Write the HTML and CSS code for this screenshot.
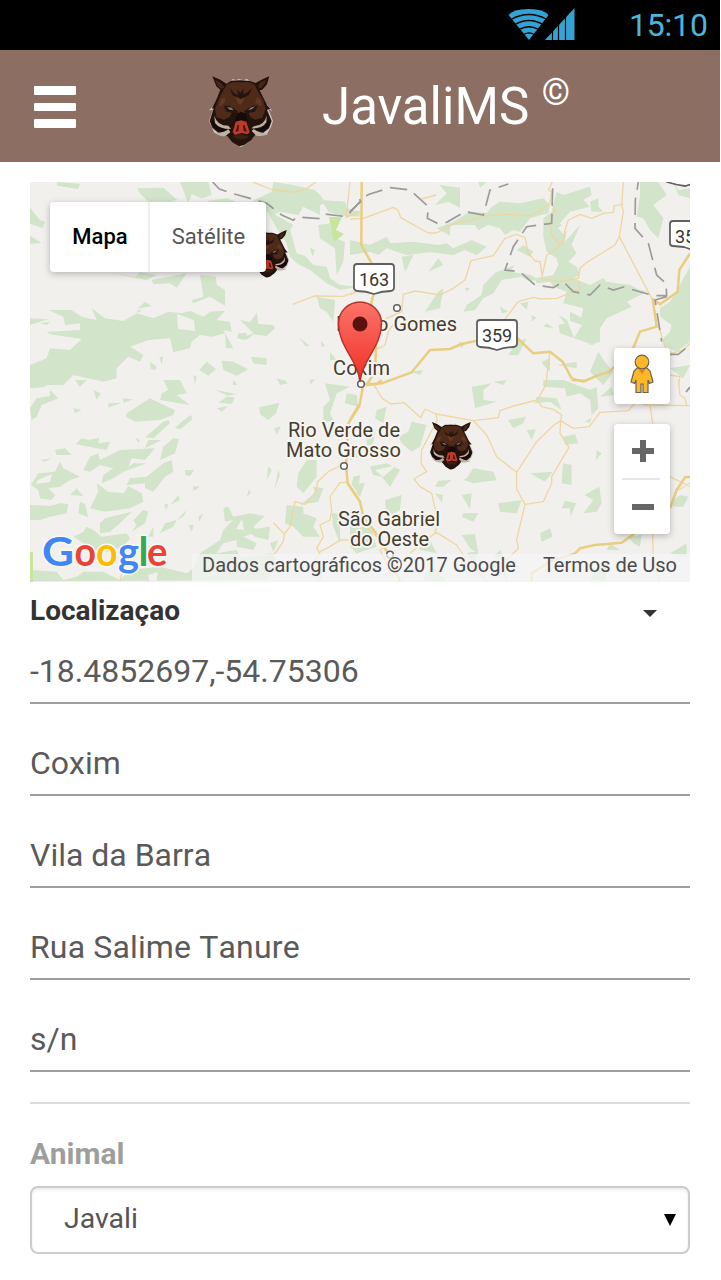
FILE: index.html
```html
<!DOCTYPE html>
<html lang="pt-BR">
<head>
<meta charset="utf-8">
<title>JavaliMS</title>
<link rel="stylesheet" href="styles.css">
</head>
<body>
<svg class="defs" width="0" height="0" aria-hidden="true">
  <defs>
    <linearGradient id="pinFill" x1="0" y1="0" x2="0" y2="1">
      <stop offset="0" stop-color="#fb7369"/><stop offset="1" stop-color="#f13025"/>
    </linearGradient>
    <symbol id="boar" viewBox="22 22 204 216">
      <path fill="#c9c6c3" d="M94 38 100 34 108 38 118 34 132 38 142 33 148 40ZM44 112 28 128 40 126 28 160 44 196 78 198 90 212 112 232 124 238 136 232 160 212 168 198 200 202 214 178 220 160 206 124 218 130 202 110Z"/>
      <path fill="#24120d" d="M38 26 62 36 80 48 94 40 122 38 150 40 168 46 190 34 209 26 202 50 188 66 180 68 188 84 202 112 212 124 202 126 216 160 208 182 190 196 168 200 156 216 134 232 118 236 98 224 82 204 56 196 38 180 30 160 42 122 36 124 50 96 62 66 50 56Z"/>
      <path fill="#4a2518" d="M46 36 64 46 74 58 66 64 54 54ZM200 36 182 44 174 58 184 62 194 50Z"/>
      <path fill="#4e2a19" d="M82 50 98 44 150 44 166 52 174 70 190 96 198 124 188 150 166 156 152 148 144 130 132 142 114 142 100 130 90 148 72 156 50 148 46 124 60 88 72 66Z"/>
      <path fill="#633922" d="M106 76 122 84 138 76 130 104 122 112 112 104ZM64 94 78 88 74 106 58 118ZM172 88 184 98 186 116 166 104Z"/>
      <path fill="#28140e" d="M90 60 102 76 116 82 112 66 122 76 132 62 130 80 144 74 158 58 148 82 124 94 98 82ZM72 114 90 114 114 130 112 150 100 136 80 132ZM174 114 158 114 134 130 136 150 146 136 166 132Z"/>
      <path fill="#78797a" d="M82 118 96 120 102 128 90 126ZM166 116 152 120 146 128 158 124Z"/>
      <path fill="#140b0a" d="M112 138 124 132 138 138 144 158 106 162Z"/>
      <path fill="#ba3b2b" d="M108 162 124 158 140 162 150 194 144 200 126 196 106 202 99 194Z"/>
      <path fill="#4c120e" d="M114 172 118 172 116 190 108 192ZM134 172 130 172 132 190 142 192Z"/>
      <path fill="none" stroke="#130b09" stroke-width="11" d="M40 162Q50 190 88 192M208 162Q198 190 162 192"/>
      <path fill="#bdb2a3" d="M44 144Q52 174 86 174L94 184Q58 184 46 166ZM201 144Q194 174 162 176L156 182Q188 184 200 164ZM44 195Q76 196 86 184L92 194 76 206Q58 206 44 195ZM206 198Q174 194 162 184L156 190 170 204Q190 208 206 198Z"/>
      <path fill="#3c2015" d="M98 204 122 200 148 206 136 214 112 214Z"/>
    </symbol>
  </defs>
</svg>
<div class="app">
  <div class="status">
    <svg class="signal" viewBox="505 5 85 38">
      <path fill="#33a3d3" d="M508.500 15Q513 9 528.500 9T548.500 15L529 40Z"/>
      <path class="wifi-gap" d="M511 19.500Q529 9.500 547 19.500M515 24.500Q529 16.500 543 24.500M519 29.500Q529 24 539 29.500M523.500 34.500Q529 31.500 534.500 34.500"/>
      <path fill="#33a3d3" d="M545 40 574.500 8V40Z"/>
      <path class="bar-gap" d="M552.500 8V41M558.500 8V41M565.500 8V41"/>
    </svg>
    <span class="clock">15:10</span>
  </div>
  <header class="header">
    <button class="menu" aria-label="Menu"><i></i><i></i><i></i></button>
    <svg class="logo"><use href="#boar"/></svg>
    <h1 class="title">JavaliMS <sup>©</sup></h1>
  </header>
  <main class="content">
    <section class="map">
      <svg class="canvas" viewBox="30 182 660 400">
        <rect x="30" y="182" width="660" height="400" fill="#f2f0ed"/>
        <g fill="#d2e4c9">
          <g transform="translate(20 175) scale(.33333)">
            <path d="M110 21 180 26 175 42 112 32ZM352 40 430 38 472 75 450 80 385 80 360 55ZM480 21 565 21 575 60 545 70 515 58 505 85 495 60ZM30 98 60 135 75 140 68 160 30 146ZM30 182 65 204 30 206ZM560 78 620 70 650 80 600 100ZM690 82 755 50 760 21 820 30 885 45 905 65 915 85 900 90 900 120 850 95 835 120 780 110 760 120ZM905 75 975 80 980 100 1020 110 1018 125 965 122 925 110ZM740 105 820 150 810 165 830 235 855 242 880 270 920 275 930 310 960 330 1015 335 960 345 920 325 870 285 830 265 810 245 800 205 770 160ZM895 150 930 145 945 190 975 200 970 260 950 300 945 220 900 190ZM870 218 885 225 878 245ZM270 292 345 305 360 292 410 300 380 315 350 310ZM395 315 500 295 480 325 470 338 450 325 400 328ZM540 300 588 305 590 330 615 345 615 392 570 365 520 385 515 375 550 365 545 330ZM375 380 395 393 352 402ZM352 405 368 407 352 413Z"/>
            <path d="M85 405 155 405 185 425 230 435 215 400 255 430 310 438 350 415 400 430 445 410 485 415 510 408 550 425 570 410 615 407 590 435 630 440 635 470 610 465 640 520 618 520 615 475 575 485 540 480 515 500 510 520 460 532 450 490 385 495 330 515 370 540 360 560 325 545 290 580 290 610 250 620 160 600 130 630 30 630 30 570 80 550 90 520 150 525 185 492 140 485 90 478 80 470 180 465 180 445 135 450 130 425ZM30 430 85 433 30 450ZM60 445 90 440 80 450ZM660 435 690 442 710 413 715 447 760 450 765 460 740 483 700 478 680 495 670 485 700 475ZM655 475 680 473 675 495 652 490ZM837 487 868 512 858 515ZM903 497 915 512 905 517ZM890 365 945 375 940 440 920 410 900 400ZM930 530 950 555 930 555ZM560 560 588 582 565 602 538 585ZM605 557 640 560 685 583 650 602 610 585ZM692 545 740 550 740 570 700 565ZM390 560 410 575 405 585 392 582ZM418 548 430 543 425 567ZM520 600 530 605 525 630ZM640 615 652 630 638 630ZM770 610 800 618 780 630ZM870 615 885 612 870 630Z"/>
          </g>
          <g transform="translate(350 175) scale(.33333)">
            <path d="M268 30 330 38 330 98 295 80 255 90 290 55ZM385 21 410 21 390 38ZM425 95 450 80 510 85 580 70 600 90 595 115 540 130 510 170 490 165 465 180 450 160 415 150 385 165 375 150 300 150 300 182 260 160 310 140 360 110 410 115ZM0 195 60 210 110 185 120 205 190 200 265 210 290 205 310 220 365 195 410 215 380 240 345 225 310 240 240 232 170 240 110 220 85 240 60 230 0 240ZM155 245 190 240 165 292ZM265 250 280 270 235 290ZM620 50 640 60 720 35 725 60 700 75 720 95 660 110 630 145 650 170 645 200 690 150 665 210 680 235 655 260 680 275 690 300 670 310 720 330 760 310 770 320 840 330 870 345 890 350 830 380 845 395 770 430 750 460 750 500 720 510 700 490 685 465 700 400 640 385 650 350 610 335 600 320 560 325 555 310 610 300 625 270 620 250 590 230 580 185 580 130 605 110ZM520 210 550 230 540 245 500 225ZM720 80 745 70 745 95 760 110 725 110ZM870 21 925 21 950 60 910 90 940 130 925 190 900 165 880 130 860 125 870 60ZM970 21 985 45 1020 40 1020 70 985 60ZM435 293 495 270 480 290 540 300 570 315 535 318 515 305 455 315 430 355 400 370 375 405 340 410 350 390 395 360 400 330ZM1020 275 1020 500 980 530 940 510 940 490 960 470 965 450 930 425 930 400 960 380 980 350 1000 310ZM625 420 660 440 660 410 690 425 740 480 730 510 630 475 625 450 645 445ZM225 410 270 400 280 340 265 350ZM345 338 360 340 350 350ZM450 395 475 410 455 415ZM510 385 535 380 530 405ZM545 420 560 428 545 440ZM590 445 610 460 580 455ZM325 500 345 505 335 520ZM500 500 530 490 505 540 475 540ZM575 560 600 550 600 590 580 570ZM620 570 680 560 680 580ZM745 530 765 560 790 590 760 630 720 590ZM960 580 1020 570 1000 610ZM180 590 220 585 210 600Z"/>
          </g>
          <g transform="translate(20 380) scale(.33333)">
            <path d="M30 0 110 0 70 22 30 25ZM30 85 50 55 90 48 90 30 115 55 65 75 50 110 35 120ZM165 0 200 0 180 20ZM220 30 242 40 230 60ZM310 55 338 58 310 70ZM265 70 305 68 265 83ZM160 85 185 90 165 100ZM320 100 390 55 425 72 465 90 460 105 420 120 345 125 318 110ZM425 40 445 30 430 0 480 0 500 40 470 45 510 75 420 60ZM512 105 518 118 480 148 465 143 485 125ZM430 125 445 120 450 130 400 175 375 172ZM345 172 360 180 355 188ZM385 180 425 180 375 205ZM168 192 185 175 205 180 238 173 235 190 270 185 260 210 205 200ZM105 210 135 205 155 225 110 225ZM60 240 95 235 75 245ZM210 230 235 220 240 240 300 210 405 205 375 240 335 235 325 260 340 250 380 250 340 265 310 275 280 295 245 310 250 285 280 265 240 255 210 275 190 270ZM460 175 477 177 465 220 420 240 430 200ZM455 240 460 275 435 290 400 335 375 325 375 310 320 315 330 295 380 290 430 250ZM33 315 55 280 105 275 120 245 130 265 180 290 150 300 120 320 85 325 105 345 95 360 60 355 55 330ZM495 270 523 270 510 288 495 285ZM520 318 540 320 520 333ZM210 385 235 335 230 310 265 335 310 340 325 318 365 340 370 365 330 385 255 395ZM30 375 90 378 120 370 145 372 140 400 90 410 60 420 30 420ZM150 345 170 325 190 348ZM432 375 445 370 440 390ZM475 345 480 360 450 375ZM180 365 195 372 205 412 175 400ZM240 430 255 415 335 395 300 430 270 455 240 460ZM340 420 370 390 385 395 375 430 335 455 350 435ZM470 420 500 390 490 410ZM420 460 435 430 470 420 460 440ZM385 470 400 440 400 470ZM160 470 190 455 200 440 220 450 245 470 320 460 330 475 310 500 265 515 220 510 190 490ZM30 570 110 575 130 600 170 590 190 575 250 575 280 590 300 600 330 570 420 560 500 580 520 565 540 520 600 480 610 450 640 420 615 425 610 385 625 380 640 410 690 400 735 408 700 440 715 455 670 470 710 490 700 510 650 500 650 480 610 490 590 520 650 510 660 530 760 520 780 560 740 600 30 604Z"/>
            <path d="M505 435 522 435 515 455ZM535 410 550 400 538 425ZM585 30 650 42 625 47ZM620 50 645 52 635 72 595 68ZM718 82 778 68 768 100 745 120 720 103ZM762 145 783 138 770 165ZM745 258 755 270 740 302ZM775 270 780 285 762 332ZM688 325 692 340 680 350ZM590 85 625 78 605 95ZM785 0 805 10 780 15ZM910 80 930 60 915 10 990 20 950 40 930 100 940 120 910 130ZM980 40 1010 45 1015 80 975 70ZM860 240 890 240 890 290 850 340 830 320 835 280ZM880 320 910 325 895 365 840 375 885 340ZM800 375 850 380 850 400 890 415 880 440 900 470 850 470 820 440 795 430ZM680 450 750 440 745 480 705 470ZM750 490 775 480 760 515ZM935 400 960 400 960 490 940 440ZM1000 290 1020 285 1015 340 995 315Z"/>
          </g>
          <g transform="translate(350 380) scale(.33333)">
            <path d="M80 90 110 80 100 130 75 115ZM145 170 175 155 185 125 230 135 210 200 185 215 155 190ZM335 345 365 340 360 388ZM365 20 425 10 400 30 400 60 440 65 375 85ZM430 5 470 0 460 15ZM474 120 528 110 520 130 490 145ZM530 150 558 148 545 180ZM560 50 620 55 635 90 600 65 555 70ZM640 170 675 162 685 190 645 195ZM580 20 580 0 640 0 720 30 740 20 745 85 725 105 720 60 690 40 650 50 645 25ZM750 50 785 20 790 45ZM705 125 725 112 720 128ZM740 210 755 220 738 240ZM639 250 665 255 665 315 635 310ZM540 280 608 275 585 305ZM703 345 748 320 755 370 740 395 700 400 730 360ZM645 362 678 370 662 410 660 385 635 385ZM570 460 600 445 608 470 575 485ZM350 295 370 265 430 275 440 300 370 310 340 300ZM265 302 305 300 280 320 255 320ZM255 340 280 345 275 368ZM445 370 515 360 500 400 450 395ZM335 465 375 462 385 520 360 505ZM340 400 385 400 370 425 335 410ZM105 360 155 345 150 390 110 410ZM30 310 45 310 30 350 20 340ZM50 160 75 155 70 190 50 200ZM0 190 25 200 40 225 0 240ZM60 260 110 250 150 270 120 320 95 290 70 285ZM0 430 60 440 80 500 20 520 0 500ZM430 530 450 510 460 530 480 545ZM835 470 875 465 870 500 850 490ZM900 410 930 405 920 430ZM965 365 990 345 1015 350 1000 380 970 380ZM960 520 1010 490 1010 530ZM780 490 810 510 770 510ZM205 490 240 480 260 520 210 510ZM350 520 385 510 375 560ZM225 580 250 560 290 604 220 604ZM740 560 775 550 765 604 720 600Z"/>
          </g>
        </g>
        <path fill="#f2f0ed" d="M177 314 194 320 195 331 178 329ZM38 480 52 474 50 482 36 484ZM236 529 242 519 244 530ZM375 470 397 465 383 477ZM148 575 158 572 156 582 149 580ZM558 228 570 220 564 235ZM567 320 582 325 574 338ZM592 220 600 227 590 244Z"/>
        <path fill="#c7e59b" d="M329 217 342 217 336 230 344 234 334 242ZM30 552H33V582H30Z"/>
        <g class="road-minor">
          <g transform="translate(20 175) scale(.33333)">
            <path d="M698 21 758 45 825 51 860 40 888 21M990 21 978 128 1020 108M818 388 885 363 970 364 1020 345"/>
          </g>
          <g transform="translate(350 175) scale(.33333)">
            <path d="M0 132 40 130 130 97 145 107 152 128 235 174 260 174 315 145 420 122 470 118 545 122 600 85 605 50 595 45 607 21M605 85 615 105 600 145 605 180 630 210 610 230 590 240 575 310 625 320 685 310 690 280 710 262 795 210 808 185 820 110 815 90 820 21M635 210 645 165 655 135 690 118 725 130 760 115 790 112 793 92 820 88M808 185 905 370M0 360 30 345M215 72 258 60M65 465 110 430 155 410 160 358 195 348 270 360 310 340 345 315 363 257 430 242 465 190 500 178 525 188 535 235 555 258 570 260 577 305M465 432 505 380 550 367 570 372 620 370 690 342 685 318M600 530 587 630M925 450 945 515 965 535 1000 525 1020 505M30 520 85 520 105 510 115 470 150 420M960 600 990 605 985 630"/>
          </g>
          <g transform="translate(20 380) scale(.33333)">
            <path d="M965 255 925 275 893 305 888 335 855 373 825 365 810 440 793 462 760 428M980 307 960 308 930 350 935 390 930 420 900 435 910 470 890 505 900 520 880 550 905 590 890 605M900 515 930 500 960 480 990 480M793 462 790 485 730 570M305 580 300 604"/>
          </g>
          <g transform="translate(350 380) scale(.33333)">
            <path d="M70 12 97 55 122 72 163 68 212 113 225 87 258 102 370 122 445 113 450 92 490 78 562 60 585 20 590 0M258 102 262 120 215 210 213 250 230 275 192 297 210 320 245 340 265 430 255 455 320 495 350 540 410 604M370 122 410 165 440 230 500 277 500 327 525 373 500 480 505 505 460 550 470 604M562 60 575 80 610 88 635 105 632 122 612 135 560 185 500 277M632 122 670 145 718 140 750 97 835 92 860 65 885 75 1020 77M632 122 630 160 657 202 605 290 605 310 580 365 525 373M900 75 908 130M908 460 910 550 930 604M985 0 990 45 1005 55 1010 75M960 290 1020 320M1020 310 985 330M260 455 180 520M40 430 110 500 90 510 130 590"/>
          </g>
        </g>
        <g class="road-major">
          <g transform="translate(350 175) scale(.33333)">
            <path d="M35 21 34 210 65 265 70 360 60 400 78 520 75 590 50 630 95 625 185 592 240 525 300 522 335 507 380 497 440 485 505 492 550 535 600 530 638 560 665 610 700 620 745 600 775 592 845 530 870 470 920 455 908 372 930 388 983 350 988 285 1020 235"/>
          </g>
          <g transform="translate(350 380) scale(.33333)"><path d="M95 0 80 12 40 12 30 70 0 120M0 320 30 365 40 410 75 455 120 530 150 604M665 0 710 3M960 385 980 330 1005 292 1020 290M855 460 815 488 735 495 690 505 675 520 600 545 545 580 545 604"/></g>
          <g transform="translate(20 380) scale(.33333)"><path d="M1020 75 985 130 978 255 983 310 1020 365"/></g>
        </g>
        <g class="border-line">
          <g transform="translate(20 175) scale(.33333)"><path d="M578 21 598 42 635 55 680 67 740 85 785 120 820 136 830 126 900 131 915 117 978 125 1020 80"/></g>
          <g transform="translate(350 175) scale(.33333)"><path d="M0 110 32 80 28 70 60 57 120 38 180 45 235 95 232 130 262 145 290 142 345 110 400 120 420 45 475 27M608 40 605 145 530 155 490 215 465 285 510 290 555 330 610 338 640 320 670 350 720 360 750 330 790 345 820 336 910 362 950 362 948 325 920 300 895 205 855 160 856 75 865 21M950 365 915 375 935 500M960 538 985 538 1020 510"/></g>
          <path d="M686 392 690 387"/>
        </g>
        <g class="shield">
          <path d="M357 264H391Q394 264 394 267V288Q394 290 391 291Q382 291 374 294Q366 291 357 291Q354 290 354 288V267Q354 264 357 264Z"/>
          <path d="M480 320H514Q517 320 517 323V344Q517 346 514 347Q505 347 497 350Q489 347 480 347Q477 346 477 344V323Q477 320 480 320Z"/>
          <path d="M673 221H707V254Q695 251 684 247L673 246Q670 246 670 243V224Q670 221 673 221ZM667 182Q676 185 685 186L692 184V178H667Z"/>
        </g>
        <g class="dots"><circle cx="397" cy="308" r="3.300"/><circle cx="361" cy="384" r="3.300"/><circle cx="344" cy="466" r="3.300"/><circle cx="390" cy="554.500" r="3.300"/></g>
        <g class="road-no"><text x="359" y="286" textLength="30">163</text><text x="482" y="342" textLength="30">359</text><text x="675" y="243" textLength="30">359</text></g>
        <g class="place">
          <text x="336" y="331" textLength="121">Pedro Gomes</text>
          <text x="333" y="375" textLength="57">Coxim</text>
          <text x="288" y="437" textLength="112">Rio Verde de</text>
          <text x="286" y="457" textLength="115">Mato Grosso</text>
          <text x="338" y="526" textLength="102">São Gabriel</text>
          <text x="350" y="546" textLength="79">do Oeste</text>
        </g>
        <use href="#boar" x="243" y="229" width="49" height="49"/>
        <use href="#boar" x="427" y="421" width="49" height="49"/>
        <path d="M360 382C358 360 338.500 347 338.500 323.500A21.500 21.500 0 0 1 381.500 323.500C381.500 347 362 360 360 382Z" fill="url(#pinFill)" stroke="#b4342c" stroke-width="1.500"/>
        <circle cx="360" cy="324" r="7.500" fill="#5a120f"/>
        <g class="brand" lengthAdjust="spacingAndGlyphs">
          <text x="42" y="566" fill="#4285f4" textLength="32" lengthAdjust="spacingAndGlyphs">G</text><text x="74.500" y="566" fill="#ea4335" textLength="21.500" lengthAdjust="spacingAndGlyphs">o</text><text x="96" y="566" fill="#fbbc05" textLength="21.500" lengthAdjust="spacingAndGlyphs">o</text><text x="118" y="566" fill="#4285f4" textLength="21" lengthAdjust="spacingAndGlyphs">g</text><text x="138.500" y="566" fill="#34a853">l</text><text x="147" y="566" fill="#ea4335" textLength="20.500" lengthAdjust="spacingAndGlyphs">e</text>
        </g>
      </svg>
      <div class="map-type"><button class="type active">Mapa</button><button class="type">Satélite</button></div>
      <div class="map-tools">
        <div class="pegman"><svg viewBox="0 0 24 40"><g fill="#fbb928" stroke="#6a6258" stroke-width="1.200"><path d="M7 14H17L20 17 23 28 19.500 29.500 18 26V38.500H13V30H11V38.500H6V26L4.500 29.500 1 28 4 17Z"/><circle cx="12" cy="8" r="6.800"/></g><path d="M8.500 15H15.500L12 20Z" fill="#e58117"/></svg></div>
        <div class="zoom"><button class="plus" aria-label="Aumentar"></button><hr><button class="minus" aria-label="Diminuir"></button></div>
      </div>
      <div class="credits"><span class="data">Dados cartográficos ©2017 Google</span><span class="terms">Termos de Uso</span></div>
    </section>
    <div class="section-head"><h2>Localizaçao</h2><i class="caret"></i></div>
    <div class="fields">
      <div class="field coords">-18.4852697,-54.75306</div>
      <div class="field">Coxim</div>
      <div class="field">Vila da Barra</div>
      <div class="field street">Rua Salime Tanure</div>
      <div class="field">s/n</div>
    </div>
    <hr class="divider">
    <h3 class="label">Animal</h3>
    <div class="select"><span>Javali</span><i class="arrow"></i></div>
  </main>
</div>
</body>
</html>
```

FILE: styles.css
```css
* { box-sizing: border-box; }
body { margin: 0; background: #fff; font-family: Roboto, "Liberation Sans", sans-serif; overflow: hidden; }
button { border: 0; padding: 0; background: none; font: inherit; }
h1, h2, h3 { margin: 0; }
.defs { display: block; position: absolute; }
.app { width: 720px; height: 1280px; }
.status { height: 50px; background: #000; display: flex; justify-content: flex-end; align-items: center; padding-right: 12px; }
.signal { width: 85px; height: 38px; margin: -2px 39px 0 0; }
.wifi-gap { fill: none; stroke: #000; stroke-width: 1.3; }
.bar-gap { stroke: #000; stroke-width: 1.2; }
.clock { font-size: 32px; line-height: 50px; color: #4ab6dc; width: 79px; letter-spacing: -.2px; white-space: nowrap; }
.header { height: 112px; background: #8d6e63; display: flex; align-items: flex-start; padding-left: 34px; color: #fff; }
.menu { width: 42px; display: flex; flex-direction: column; gap: 8px; margin-top: 36px; }
.menu i { height: 8.700px; background: #fff; border-radius: 1px; }
.logo { width: 68px; height: 72px; margin: 25px 0 0 131px; }
.title { margin-left: 47px; font-size: 51px; font-weight: 400; line-height: 60px; padding-top: 27px; white-space: nowrap; }
.title sup { font-size: 36px; line-height: 0; vertical-align: 19px; }
.content { padding: 20px 30px 0; }
.map { height: 400px; display: grid; overflow: hidden; }
.map > * { grid-area: 1 / 1; }
.canvas { width: 660px; height: 400px; display: block; }
.road-minor { fill: none; stroke: #eed6a2; stroke-width: 4; stroke-linejoin: round; }
.road-major { fill: none; stroke: #e9cd80; stroke-width: 7.5; stroke-linejoin: round; }
.border-line { fill: none; stroke: #9b9b9b; stroke-width: 5; stroke-dasharray: 52 24; }
.border-line > path { stroke-width: 2; }
.shield { fill: #fff; stroke: #5f5f5f; stroke-width: 1.8; }
.dots { fill: #fff; stroke: #5f5f5f; stroke-width: 1.5; }
.road-no { font-size: 18px; fill: #39352b; }
.place { font-size: 20px; fill: #453d2e; stroke: #f5f4f1; stroke-width: 4; stroke-linejoin: round; paint-order: stroke; }
.brand { font: 700 40px Lato, sans-serif; stroke: #f8f8f6; stroke-width: 3; stroke-linejoin: round; paint-order: stroke; }
.map-type { display: flex; justify-self: start; align-self: start; margin: 20px; width: 216px; height: 70px; background: #fff; border-radius: 4px; box-shadow: 0 2px 7px rgba(0,0,0,.25); }
.type { font-size: 22px; color: #565656; flex: 1; text-align: center; padding: 0 0 2px 1px; }
.type.active { flex: 0 0 100px; font-weight: 500; color: #000; border-right: 2px solid #eee; padding-left: 2px; }
.map-tools { justify-self: end; align-self: start; display: flex; flex-direction: column; gap: 20px; margin: 166px 20px 0 0; }
.pegman, .zoom { width: 56px; background: #fff; border-radius: 4px; box-shadow: 0 2px 7px rgba(0,0,0,.25); }
.pegman { height: 56px; display: flex; justify-content: center; padding-top: 6px; }
.pegman svg { width: 24px; height: 40px; }
.zoom { height: 110px; display: grid; grid-template-rows: 54px 2px 54px; }
.zoom hr { width: 38px; height: 2px; border: 0; margin: 0 auto 0 8px; background: #e6e6e6; }
.plus, .minus { background: linear-gradient(#666, #666) 18px 24px / 22px 6px no-repeat; }
.plus { background: linear-gradient(#666, #666) 18px 24px / 22px 6px no-repeat, linear-gradient(#666, #666) 26px 16px / 6px 22px no-repeat; }
.credits { justify-self: end; align-self: end; display: flex; height: 28px; width: 498px; background: rgba(245,245,245,.75); font-size: 20px; line-height: 23px; color: #4b4b4b; white-space: nowrap; padding-left: 10px; }
.terms { margin-left: auto; padding-right: 13px; }
.section-head { height: 58px; display: flex; justify-content: space-between; color: #333; padding-right: 33px; }
.section-head h2 { font-size: 28px; font-weight: 700; line-height: 57px; }
.caret { border: 7px solid transparent; border-top-color: #333; border-bottom: 0; margin-top: 28px; height: 0; }
.fields { display: flex; flex-direction: column; gap: 28px; }
.field { height: 64px; border-bottom: 2px solid #9e9e9e; font-size: 32px; line-height: 62px; color: #5a5a5a; font-kerning: none; }
.street { letter-spacing: .15px; }
.divider { border: 0; height: 2px; background: #ddd; margin: 30px 0 0; }
.label { font-size: 30px; font-weight: 700; color: #9e9e9e; line-height: 36px; margin: 32px 0 14px; }
.select { height: 68px; border: 2px solid #ccc; border-radius: 8px; box-shadow: inset 0 2px 3px rgba(0,0,0,.08); display: flex; align-items: center; justify-content: space-between; padding: 0 12px 4px 32px; font-size: 28.500px; color: #555; }
.arrow { border: 6px solid transparent; border-top: 12px solid #000; border-bottom: 0; margin-top: 4px; }
```
